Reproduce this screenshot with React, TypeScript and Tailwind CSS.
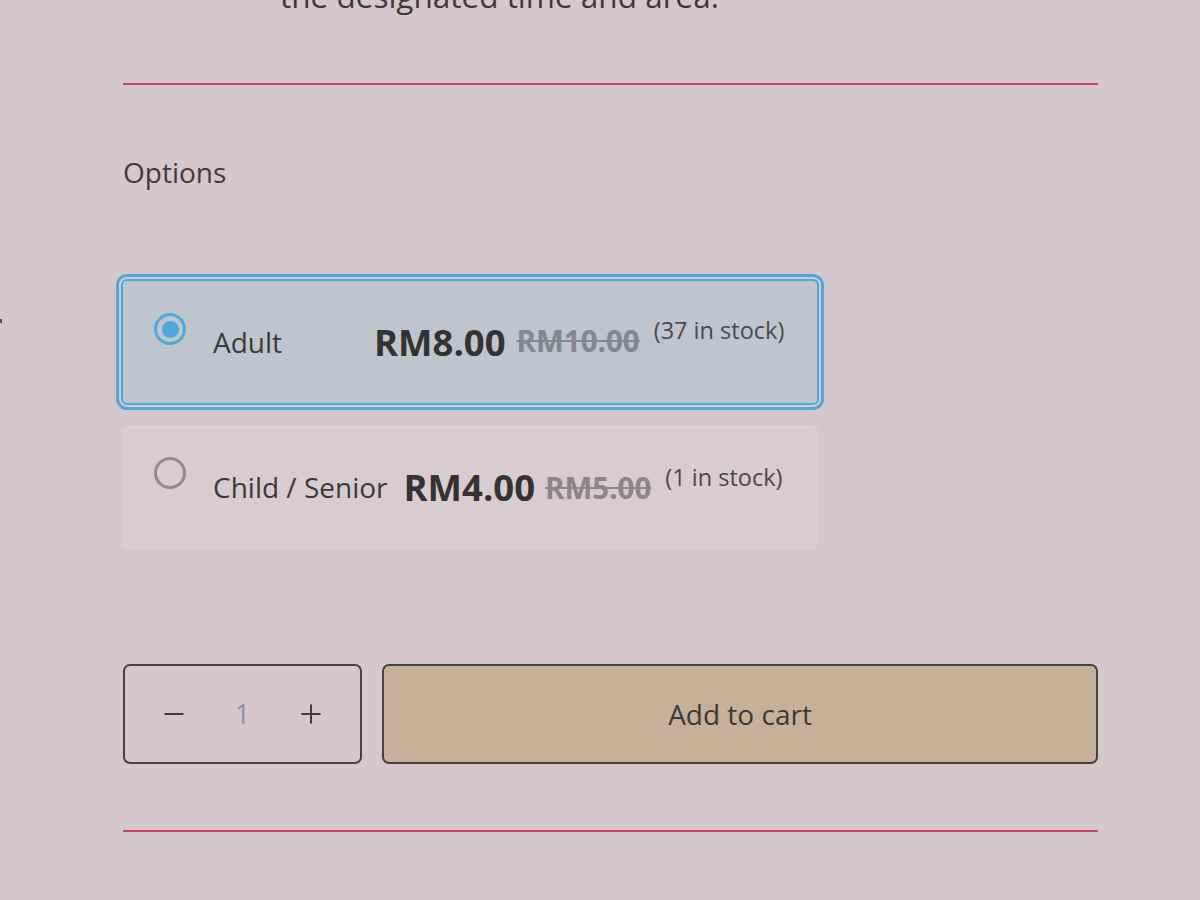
import React from "react";

function Radio({ checked }: { checked: boolean }) {
  return checked ? (
    <div className="w-[32px] h-[32px] shrink-0 rounded-full border-[3px] border-[#4fa8dc] flex items-center justify-center">
      <div className="w-[17px] h-[17px] rounded-full bg-[#4fa8dc]" />
    </div>
  ) : (
    <div className="w-[32px] h-[32px] shrink-0 rounded-full border-[3px] border-[#8f8a8d]" />
  );
}

export default function App() {
  return (
    <div className="relative min-h-[900px] w-full overflow-hidden bg-[#d4c8cc] font-['Open_Sans','Noto_Sans',sans-serif] text-[#3a3a3a]">
      <div className="absolute left-0 top-[319px] w-[2px] h-[4px] bg-[#555]" />
      <div className="ml-[123px] w-[975px]">
        <p className="-mt-[26px] pl-[157px] text-[31.5px] leading-[1.4] text-[#3a3a3a] whitespace-nowrap">
          the designated time and area.
        </p>
        <div className="mt-[65px] h-[2px] bg-[#c9435f]" />
        <p className="mt-[66px] text-[28px] leading-[1.5] text-[#3d3d3d]">Options</p>

        <div className="mt-[86px] -ml-[2px] w-[698px] h-[126px] rounded-[6px] border-2 border-[#4fa8dc] outline-3 outline-offset-2 outline-[#4fa8dc] bg-[#bfc4cd] pt-[32px] pl-[31px]">
          <div className="flex items-start">
            <Radio checked />
            <div className="ml-[27px] mt-[6px] flex items-start">
              <span className="mt-[9px] min-w-[145px] text-[28px] leading-none text-[#3a3a3a]">Adult</span>
              <span className="ml-[16px] mt-[5px] text-[36.5px] font-bold leading-none text-[#333]">RM8.00</span>
              <span className="ml-[11px] mt-[7px] text-[29.5px] font-bold leading-none text-[#85878d] line-through decoration-2">RM10.00</span>
              <span className="ml-[14px] text-[23.5px] leading-none text-[#4a4a4e]">(37 in stock)</span>
            </div>
          </div>
        </div>

        <div className="mt-[21px] w-[695px] h-[123px] rounded-[6px] border border-[#ddd3d7] bg-[#d7ccd0] pt-[30px] pl-[30px]">
          <div className="flex items-start">
            <Radio checked={false} />
            <div className="ml-[27px] mt-[8px] flex items-start">
              <span className="mt-[8px] min-w-[145px] text-[28px] leading-none text-[#3a3a3a] whitespace-nowrap">Child / Senior</span>
              <span className="ml-[16px] mt-[4px] text-[36.5px] font-bold leading-none text-[#333]">RM4.00</span>
              <span className="ml-[10px] mt-[8px] text-[29.5px] font-bold leading-none text-[#8a878a] line-through decoration-2">RM5.00</span>
              <span className="ml-[14px] mt-[1px] text-[23.5px] leading-none text-[#4a4a4e]">(1 in stock)</span>
            </div>
          </div>
        </div>

        <div className="mt-[115px] flex gap-[20px]">
          <div className="w-[239px] h-[100px] rounded-[7px] border-2 border-[#444] flex items-center">
            <button className="w-[98px] h-full flex items-center justify-center">
              <svg width="20" height="20" viewBox="0 0 20 20">
                <line x1="0.5" y1="10" x2="19.5" y2="10" stroke="#3d3d3d" strokeWidth="2" />
              </svg>
            </button>
            <span className="flex-1 text-center text-[27px] text-[#8d93a6]">1</span>
            <button className="w-[98px] h-full flex items-center justify-center">
              <svg width="20" height="20" viewBox="0 0 20 20">
                <line x1="0.5" y1="10" x2="19.5" y2="10" stroke="#3d3d3d" strokeWidth="2" />
                <line x1="10" y1="0.5" x2="10" y2="19.5" stroke="#3d3d3d" strokeWidth="2" />
              </svg>
            </button>
          </div>
          <button className="flex-1 h-[100px] rounded-[7px] border-2 border-[#444] bg-[#c7b09a] text-[28px] text-[#3a3a3a]">
            Add to cart
          </button>
        </div>

        <div className="mt-[66px] h-[2px] bg-[#c9435f]" />
      </div>
    </div>
  );
}
